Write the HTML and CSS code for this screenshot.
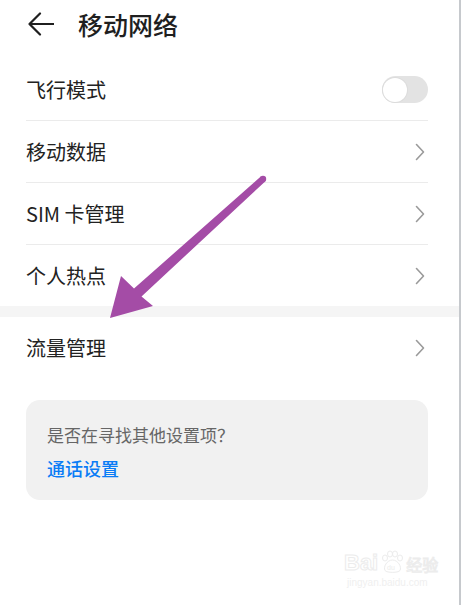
FILE: index.html
```html
<!DOCTYPE html>
<html>
<head>
    <link rel="stylesheet" href="styles.css">
</head>
<body>
    <div class="screen">
        <div class="header">
            <svg class="back" width="26" height="24" viewBox="0 0 26 24">
                <path d="M12 1.5 L1.5 12 L12 22.5 M1.5 12 H25.5" fill="none" stroke="#1f1f1f" stroke-width="2.2" stroke-linecap="round" stroke-linejoin="round"/>
            </svg>
            <h1>移动网络</h1>
        </div>

        <div class="list">
            <div class="row">
                <span class="label">飞行模式</span>
                <span class="toggle"><span class="knob"></span></span>
            </div>
            <div class="row">
                <span class="label">移动数据</span>
                <svg class="chevron" width="10" height="18" viewBox="0 0 10 18"><path d="M1.5 1.5 L8.5 9 L1.5 16.5" fill="none" stroke="#9a9a9a" stroke-width="1.6" stroke-linecap="round" stroke-linejoin="round"/></svg>
            </div>
            <div class="row">
                <span class="label">SIM 卡管理</span>
                <svg class="chevron" width="10" height="18" viewBox="0 0 10 18"><path d="M1.5 1.5 L8.5 9 L1.5 16.5" fill="none" stroke="#9a9a9a" stroke-width="1.6" stroke-linecap="round" stroke-linejoin="round"/></svg>
            </div>
            <div class="row last">
                <span class="label">个人热点</span>
                <svg class="chevron" width="10" height="18" viewBox="0 0 10 18"><path d="M1.5 1.5 L8.5 9 L1.5 16.5" fill="none" stroke="#9a9a9a" stroke-width="1.6" stroke-linecap="round" stroke-linejoin="round"/></svg>
            </div>
        </div>

        <div class="band"></div>

        <div class="list">
            <div class="row last">
                <span class="label">流量管理</span>
                <svg class="chevron" width="10" height="18" viewBox="0 0 10 18"><path d="M1.5 1.5 L8.5 9 L1.5 16.5" fill="none" stroke="#9a9a9a" stroke-width="1.6" stroke-linecap="round" stroke-linejoin="round"/></svg>
            </div>
        </div>

        <div class="hint-card">
            <div class="hint-text">是否在寻找其他设置项？</div>
            <div class="hint-link">通话设置</div>
        </div>

        <!-- annotation arrow drawn over the screenshot -->
        <svg class="pointer" width="461" height="605" viewBox="0 0 461 605">
            <polygon points="260.8,176.6 134,288.5 121,276 110,318 153,306 141.5,296.5 265.2,181.4" fill="#a44ca6"/>
            <circle cx="263" cy="179" r="3.2" fill="#a44ca6"/>
        </svg>

        <div class="watermark">
            <div class="wm-top">
                <span class="wm-bai">Bai</span>
                <span class="wm-paw">
                    <svg width="26" height="24" viewBox="0 0 26 24">
                        <g fill="none" stroke="#ececec" stroke-width="1">
                            <ellipse cx="6" cy="8" rx="2.5" ry="3"/>
                            <ellipse cx="11" cy="4" rx="2.5" ry="3"/>
                            <ellipse cx="16" cy="4" rx="2.5" ry="3"/>
                            <ellipse cx="21" cy="8" rx="2.5" ry="3"/>
                            <path d="M13.5 10 C8 10 4 17 6 20.5 C8 23 19 23 21 20.5 C23 17 19 10 13.5 10 Z"/>
                        </g>
                        <text x="8" y="20" font-size="7" fill="#ececec" font-family="Liberation Sans, sans-serif">du</text>
                    </svg>
                </span>
                <span class="wm-jy">经验</span>
            </div>
            <div class="wm-url">jingyan.baidu.com</div>
        </div>
    </div>
</body>
</html>
```

FILE: styles.css
```css
body {
    margin: 0;
    background: #fff;
    font-family: "Noto Sans CJK SC", "Noto Sans", sans-serif;
}
.screen {
    position: relative;
    width: 459px;
    height: 605px;
    border-right: 2px solid #c6c9cd;
    background: #fff;
    overflow: hidden;
}
.header {
    height: 48px;
    display: flex;
    align-items: center;
    padding-left: 28px;
    margin-bottom: 11px;
}
.back {
    display: block;
}
.header h1 {
    margin: 0 0 0 24px;
    font-size: 25px;
    font-weight: 500;
    color: #1f1f1f;
    line-height: 1;
}
.list {
    padding: 0 31px 0 26px;
}
.row {
    height: 61px;
    display: flex;
    align-items: center;
    justify-content: space-between;
    border-bottom: 1px solid #ebebeb;
}
.row.last {
    border-bottom: none;
}
.label {
    font-size: 20px;
    font-weight: 400;
    color: #222;
    line-height: 1;
}
.chevron {
    display: block;
    margin-right: 3px;
}
.toggle {
    width: 46px;
    height: 27px;
    border-radius: 14px;
    background: #e3e3e3;
    display: flex;
    align-items: center;
    padding-left: 1px;
    box-sizing: border-box;
}
.knob {
    width: 24px;
    height: 24px;
    border-radius: 50%;
    background: #fff;
    box-shadow: 0 0 0 1px #dcdcdc;
}
.band {
    height: 11px;
    background: #f5f5f5;
}
.hint-card {
    margin: 22px 31px 0 26px;
    height: 100px;
    box-sizing: border-box;
    padding: 24px 21px 0;
    background: #f1f1f1;
    border-radius: 14px;
}
.hint-text {
    font-size: 17px;
    color: #666;
    line-height: 22px;
}
.hint-link {
    margin-top: 11px;
    font-size: 18px;
    font-weight: 500;
    color: #0a7cf6;
    line-height: 22px;
}
.pointer {
    position: absolute;
    left: 0;
    top: 0;
    pointer-events: none;
}
.watermark {
    position: absolute;
    left: 344px;
    top: 550px;
}
.wm-top {
    display: flex;
    align-items: flex-end;
    gap: 1px;
}
.wm-bai {
    font-family: "Liberation Sans", sans-serif;
    font-size: 22px;
    font-weight: bold;
    line-height: 22px;
    color: #fff;
    -webkit-text-stroke: 1px #ececec;
}
.wm-paw svg {
    display: block;
}
.wm-jy {
    font-size: 16px;
    line-height: 20px;
    color: #fff;
    -webkit-text-stroke: 1px #ececec;
}
.wm-url {
    font-family: "Liberation Sans", sans-serif;
    font-size: 10px;
    color: #efefef;
    margin-top: 3px;
    padding-left: 3px;
}
```
